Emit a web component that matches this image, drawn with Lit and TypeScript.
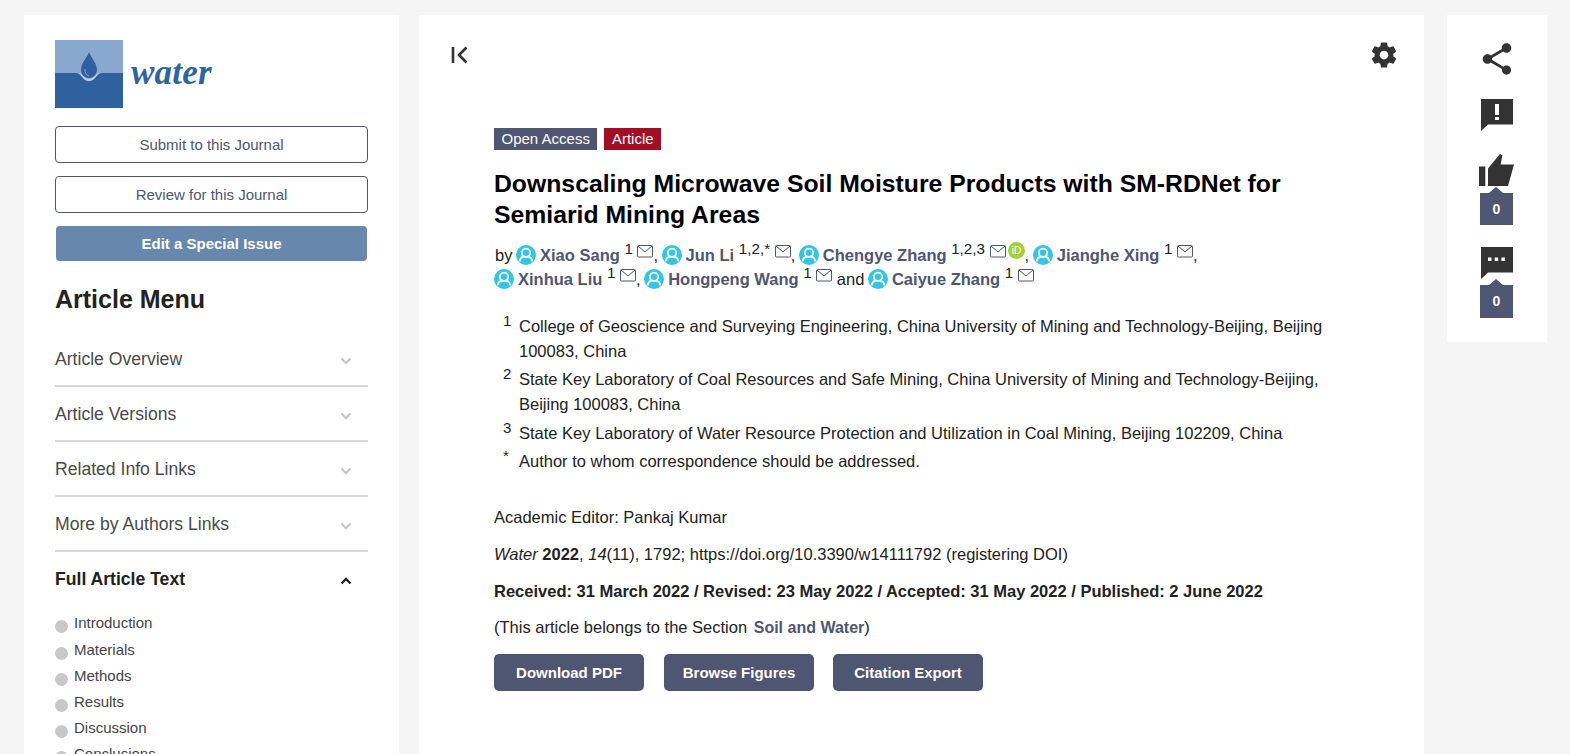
import { LitElement, html, css } from "lit";
import { customElement } from "lit/decorators.js";

const person = html`<svg class="person" viewBox="0 0 20 20"><circle cx="10" cy="10" r="10" fill="#32c5e4"/><circle cx="10" cy="7.8" r="4.200" fill="none" stroke="#fff" stroke-width="1.800"/><path d="M3.600 16.400c.6-3.400 2.800-4.600 4.400-4.900M16.400 16.400c-.6-3.400-2.800-4.600-4.400-4.900" fill="none" stroke="#fff" stroke-width="1.800"/></svg>`;
const mail = html`<svg class="mail" viewBox="0 0 16 13"><rect x=".5" y=".5" width="15" height="11.5" rx="1" fill="none" stroke="#4f5671"/><path d="M1 1l7 6 7-6" fill="none" stroke="#4f5671"/></svg>`;
const chevron = (up = false, color = "#c8c8c8") => html`<svg class="chev" viewBox="0 0 12 8"><path d="${up ? "M1.5 6.5L6 2l4.5 4.5" : "M1.5 1.5L6 6l4.5-4.5"}" fill="none" stroke="${color}" stroke-width="2.4"/></svg>`;

const author = (name: string, sup: string, extra: unknown = "") => html`${person}<b class="au">${name}</b> <sup>${sup}</sup> ${mail}${extra}`;

@customElement("app-root")
export class AppRoot extends LitElement {
  static styles = css`
    :host { display: flex; align-items: flex-start; height: 754px; overflow: hidden; box-sizing: border-box; padding: 15px 23px 0 24px; background: #f5f5f5; font-family: "Liberation Sans", Arial, sans-serif; color: #222; font-size: 16.5px; }
    .side { width: 375px; flex: none; box-sizing: border-box; background: #fff; padding: 25px 31px 0; height: 900px; }
    .main { width: 1005px; flex: none; margin-left: 20px; box-sizing: border-box; background: #fff; height: 900px; padding: 28px 25px 0 30px; }
    .right { width: 100px; flex: none; margin-left: 23px; height: 327px; background: #fff; display: flex; flex-direction: column; align-items: center; padding: 25px 1px 0 0; box-sizing: border-box; }
    .logo { display: flex; align-items: center; gap: 8px; height: 68px; }
    .logo svg { width: 68px; height: 68px; display: block; }
    .logo span { font-family: "Liberation Serif", serif; font-style: italic; font-weight: bold; font-size: 35px; color: #2f659e; margin-top: -2px; letter-spacing: .2px; }
    .btn { display: flex; align-items: center; justify-content: center; box-sizing: border-box; height: 37px; border: 1px solid #4f5671; border-radius: 4px; color: #4f5671; font-size: 15px; margin-top: 13px; }
    .btn.first { margin-top: 18px; }
    .btn.fill { height: 35px; background: #6787ad; border: 0; margin: 13px 1px 0; color: #fff; font-weight: bold; }
    h2 { font-size: 25px; margin: 23px 0 18px; line-height: 30px; color: #222; font-weight: bold; }
    .row { height: 52px; padding: 1px 16px 0 0; border-bottom: 2px solid #d8d8d8; display: flex; align-items: center; justify-content: space-between; font-size: 17.6px; color: #4a4a4a; }
    .row.open { border: 0; font-weight: bold; font-size: 17.6px; color: #222; height: 54px; padding-top: 0; }
    .chev { width: 12px; height: 8px; margin-top: 4px; }
    ul { list-style: none; margin: 8.4px 0 0; padding: 0; font-size: 15px; color: #444; }
    li { height: 26.2px; display: flex; gap: 6px; }
    li i { width: 13px; height: 13px; border-radius: 50%; background: #c8c8c8; margin-top: 6px; flex: none; }
    .top { display: flex; justify-content: space-between; align-items: center; height: 24px; }
    .top svg { display: block; }
    .content { margin: 61px 0 0 45px; width: 850px; }
    .tags { display: flex; gap: 7px; height: 22px; }
    .tag { background: #4f5671; color: #fff; font-size: 15px; height: 22px; line-height: 22px; padding: 0 7.5px; }
    .tag.red { background: #a30d25; }
    h1 { font-size: 24.75px; line-height: 31px; margin: 18px 0 0; color: #000; font-weight: bold; }
    .authors { margin-top: 12px; padding-left: 1px; line-height: 24px; color: #222; }
    .au { color: #4f5671; font-weight: bold; margin-left: 4px; }
    sup { font-size: 15.2px; line-height: 0; vertical-align: 7px; }
    .person { width: 20px; height: 20px; vertical-align: -4px; margin-left: -1px; }
    .mail { width: 16px; height: 13px; vertical-align: 3px; }
    .orcid { width: 17px; height: 17px; vertical-align: 2px; margin-left: 2px; }
    .affs { margin-top: 23px; }
    .aff { display: flex; line-height: 25px; margin-bottom: 3.4px; color: #222; }
    .aff sup { flex: none; width: 25px; padding-left: 9px; box-sizing: border-box; vertical-align: baseline; line-height: 13px; font-size: 15px; }
    .aff div { width: 810px; }
    .p { margin-top: 15px; line-height: 22px; height: 22px; }
    .p.ed { margin-top: 32px; }
    .p.sec { margin-top: 14px; }
    .p a { color: #4f5671; font-weight: bold; margin-left: 2px; font-size: 16px; }
    .acts { display: flex; margin-top: 16px; }
    .act { height: 37px; width: 150px; background: #4f5671; color: #fff; font-weight: bold; font-size: 15px; border-radius: 5px; display: flex; align-items: center; justify-content: center; margin-right: 20px; }
    .act.b { margin-right: 19px; }
    .ic { display: block; flex: none; }
    .alert { margin-top: 21px; }
    .thumb { margin-top: 23px; }
    .talk { margin-top: 22px; }
    .count { position: relative; background: #4f5671; color: #fff; font-weight: bold; font-size: 14px; width: 33px; height: 32px; line-height: 32px; text-align: center; flex: none; }
    .count.c1 { margin-top: 7px; }
    .count.c2 { margin-top: 6px; height: 33px; line-height: 33px; }
    .count::before { content: ""; position: absolute; left: 9px; top: -6px; border: 7.5px solid transparent; border-top: 0; border-bottom: 6px solid #4f5671; }
  `;

  render() {
    const rows = ["Article Overview", "Article Versions", "Related Info Links", "More by Authors Links"];
    const items = ["Introduction", "Materials", "Methods", "Results", "Discussion", "Conclusions"];
    return html`
      <aside class="side">
        <div class="logo">
          <svg viewBox="0 0 68 68"><rect width="68" height="68" fill="#2e619e"/><rect width="68" height="33" fill="#89a8cf"/><path d="M21 33c6 0 6 8 13 8s7-8 13-8z" fill="#c3d3e7"/><path d="M23 33c5 0 5 6 11 6s6-6 11-6z" fill="#89a8cf"/><path d="M34 12c2 6 8 11 8 18a8 8 0 0 1-16 0c0-7 6-12 8-18z" fill="#2e619e"/><path d="M30 29c-.5 3.500 1 6 4 7" fill="none" stroke="#89a8cf" stroke-width="1"/></svg>
          <span>water</span>
        </div>
        <div class="btn first">Submit to this Journal</div>
        <div class="btn">Review for this Journal</div>
        <div class="btn fill">Edit a Special Issue</div>
        <h2>Article Menu</h2>
        ${rows.map((r) => html`<div class="row"><span>${r}</span>${chevron()}</div>`)}
        <div class="row open"><span>Full Article Text</span>${chevron(true, "#222")}</div>
        <ul>${items.map((i) => html`<li><i></i><span>${i}</span></li>`)}</ul>
      </aside>
      <main class="main">
        <div class="top">
          <svg width="20" height="20" viewBox="0 0 20 20"><path d="M4 2v16" stroke="#333" stroke-width="2.600" fill="none"/><path d="M17.500 2.500L10 10l7.500 7.500" stroke="#333" stroke-width="2.600" fill="none"/></svg>
          <svg width="30" height="30" viewBox="0 0 24 24"><path fill="#333" d="M19.430 12.980c.04-.32.07-.64.07-.98s-.03-.66-.07-.98l2.110-1.650c.19-.15.24-.42.12-.64l-2-3.460c-.12-.22-.39-.3-.61-.22l-2.490 1c-.52-.4-1.080-.73-1.690-.98l-.38-2.650C14.460 2.180 14.250 2 14 2h-4c-.25 0-.46.180-.49.420l-.38 2.650c-.61.250-1.170.59-1.690.98l-2.490-1c-.23-.09-.49 0-.61.220l-2 3.460c-.13.220-.07.490.12.640l2.110 1.650c-.04.320-.07.650-.07.980s.03.660.07.980l-2.110 1.650c-.19.150-.24.420-.12.640l2 3.460c.12.220.39.300.61.220l2.490-1c.52.400 1.080.730 1.690.980l.38 2.650c.03.240.24.420.49.420h4c.25 0 .46-.18.49-.42l.38-2.650c.61-.25 1.170-.59 1.690-.98l2.490 1c.23.090.49 0 .61-.22l2-3.460c.12-.22.07-.49-.12-.64l-2.110-1.650zM12 15.500c-1.930 0-3.500-1.570-3.500-3.500s1.570-3.500 3.500-3.500 3.500 1.570 3.500 3.500-1.570 3.500-3.500 3.500z"/></svg>
        </div>
        <div class="content">
          <div class="tags"><span class="tag">Open Access</span><span class="tag red">Article</span></div>
          <h1>Downscaling Microwave Soil Moisture Products with SM-RDNet for Semiarid Mining Areas</h1>
          <div class="authors">by ${author("Xiao Sang", "1")}, ${author("Jun Li", "1,2,*")}, ${author("Chengye Zhang", "1,2,3", html`<svg class="orcid" viewBox="0 0 17 17"><circle cx="8.500" cy="8.500" r="8.500" fill="#a6ce39"/><text x="8.500" y="12" font-size="10" fill="#fff" text-anchor="middle" font-family="Liberation Sans">iD</text></svg>`)}, ${author("Jianghe Xing", "1")},<br>${author("Xinhua Liu", "1")}, ${author("Hongpeng Wang", "1")} and ${author("Caiyue Zhang", "1")}</div>
          <div class="affs">
            <div class="aff"><sup>1</sup><div>College of Geoscience and Surveying Engineering, China University of Mining and Technology-Beijing, Beijing 100083, China</div></div>
            <div class="aff"><sup>2</sup><div>State Key Laboratory of Coal Resources and Safe Mining, China University of Mining and Technology-Beijing, Beijing 100083, China</div></div>
            <div class="aff"><sup>3</sup><div>State Key Laboratory of Water Resource Protection and Utilization in Coal Mining, Beijing 102209, China</div></div>
            <div class="aff"><sup>*</sup><div>Author to whom correspondence should be addressed.</div></div>
          </div>
          <div class="p ed">Academic Editor: Pankaj Kumar</div>
          <div class="p"><i>Water</i> <b>2022</b>, <i>14</i>(11), 1792; https://doi.org/10.3390/w14111792 (registering DOI)</div>
          <div class="p"><b>Received: 31 March 2022 / Revised: 23 May 2022 / Accepted: 31 May 2022 / Published: 2 June 2022</b></div>
          <div class="p sec">(This article belongs to the Section <a>Soil and Water</a>)</div>
          <div class="acts"><div class="act">Download PDF</div><div class="act b">Browse Figures</div><div class="act">Citation Export</div></div>
        </div>
      </main>
      <aside class="right">
        <svg class="ic" width="38" height="38" viewBox="0 0 24 24"><path fill="#333" d="M18 16.080c-.76 0-1.440.3-1.960.770L8.910 12.700c.05-.23.090-.46.090-.7s-.04-.47-.09-.7l7.050-4.110c.54.500 1.250.810 2.040.810 1.660 0 3-1.340 3-3s-1.340-3-3-3-3 1.340-3 3c0 .24.040.47.090.7L8.040 9.810C7.500 9.310 6.790 9 6 9c-1.660 0-3 1.340-3 3s1.340 3 3 3c.79 0 1.500-.31 2.040-.81l7.120 4.160c-.05.210-.08.430-.08.650 0 1.610 1.310 2.920 2.920 2.920 1.610 0 2.920-1.310 2.920-2.920s-1.310-2.920-2.920-2.920z"/></svg>
        <svg class="ic alert" width="32" height="32" viewBox="0 0 32 32"><path fill="#333" d="M0 0H32V25.500H7L0 32Z"/><path fill="#fff" d="M14 5h4v11h-4zM14 18h4v3h-4z"/></svg>
        <svg class="ic thumb" width="35" height="32" viewBox="0 0 35 32"><path fill="#333" d="M0 12.500H6.300V32H0ZM9 14.500L21 0 23.500 1.200 21.500 10.500H35L29 32H9Z"/></svg>
        <div class="count c1">0</div>
        <svg class="ic talk" width="32" height="32" viewBox="0 0 32 32"><path fill="#333" d="M0 0H32V25.500H7L0 32Z"/><path fill="#fff" d="M7 10.500h3.500V14H7zM13.700 10.500h3.500V14h-3.500zM20.400 10.500h3.500V14h-3.500z"/></svg>
        <div class="count c2">0</div>
      </aside>
    `;
  }
}
